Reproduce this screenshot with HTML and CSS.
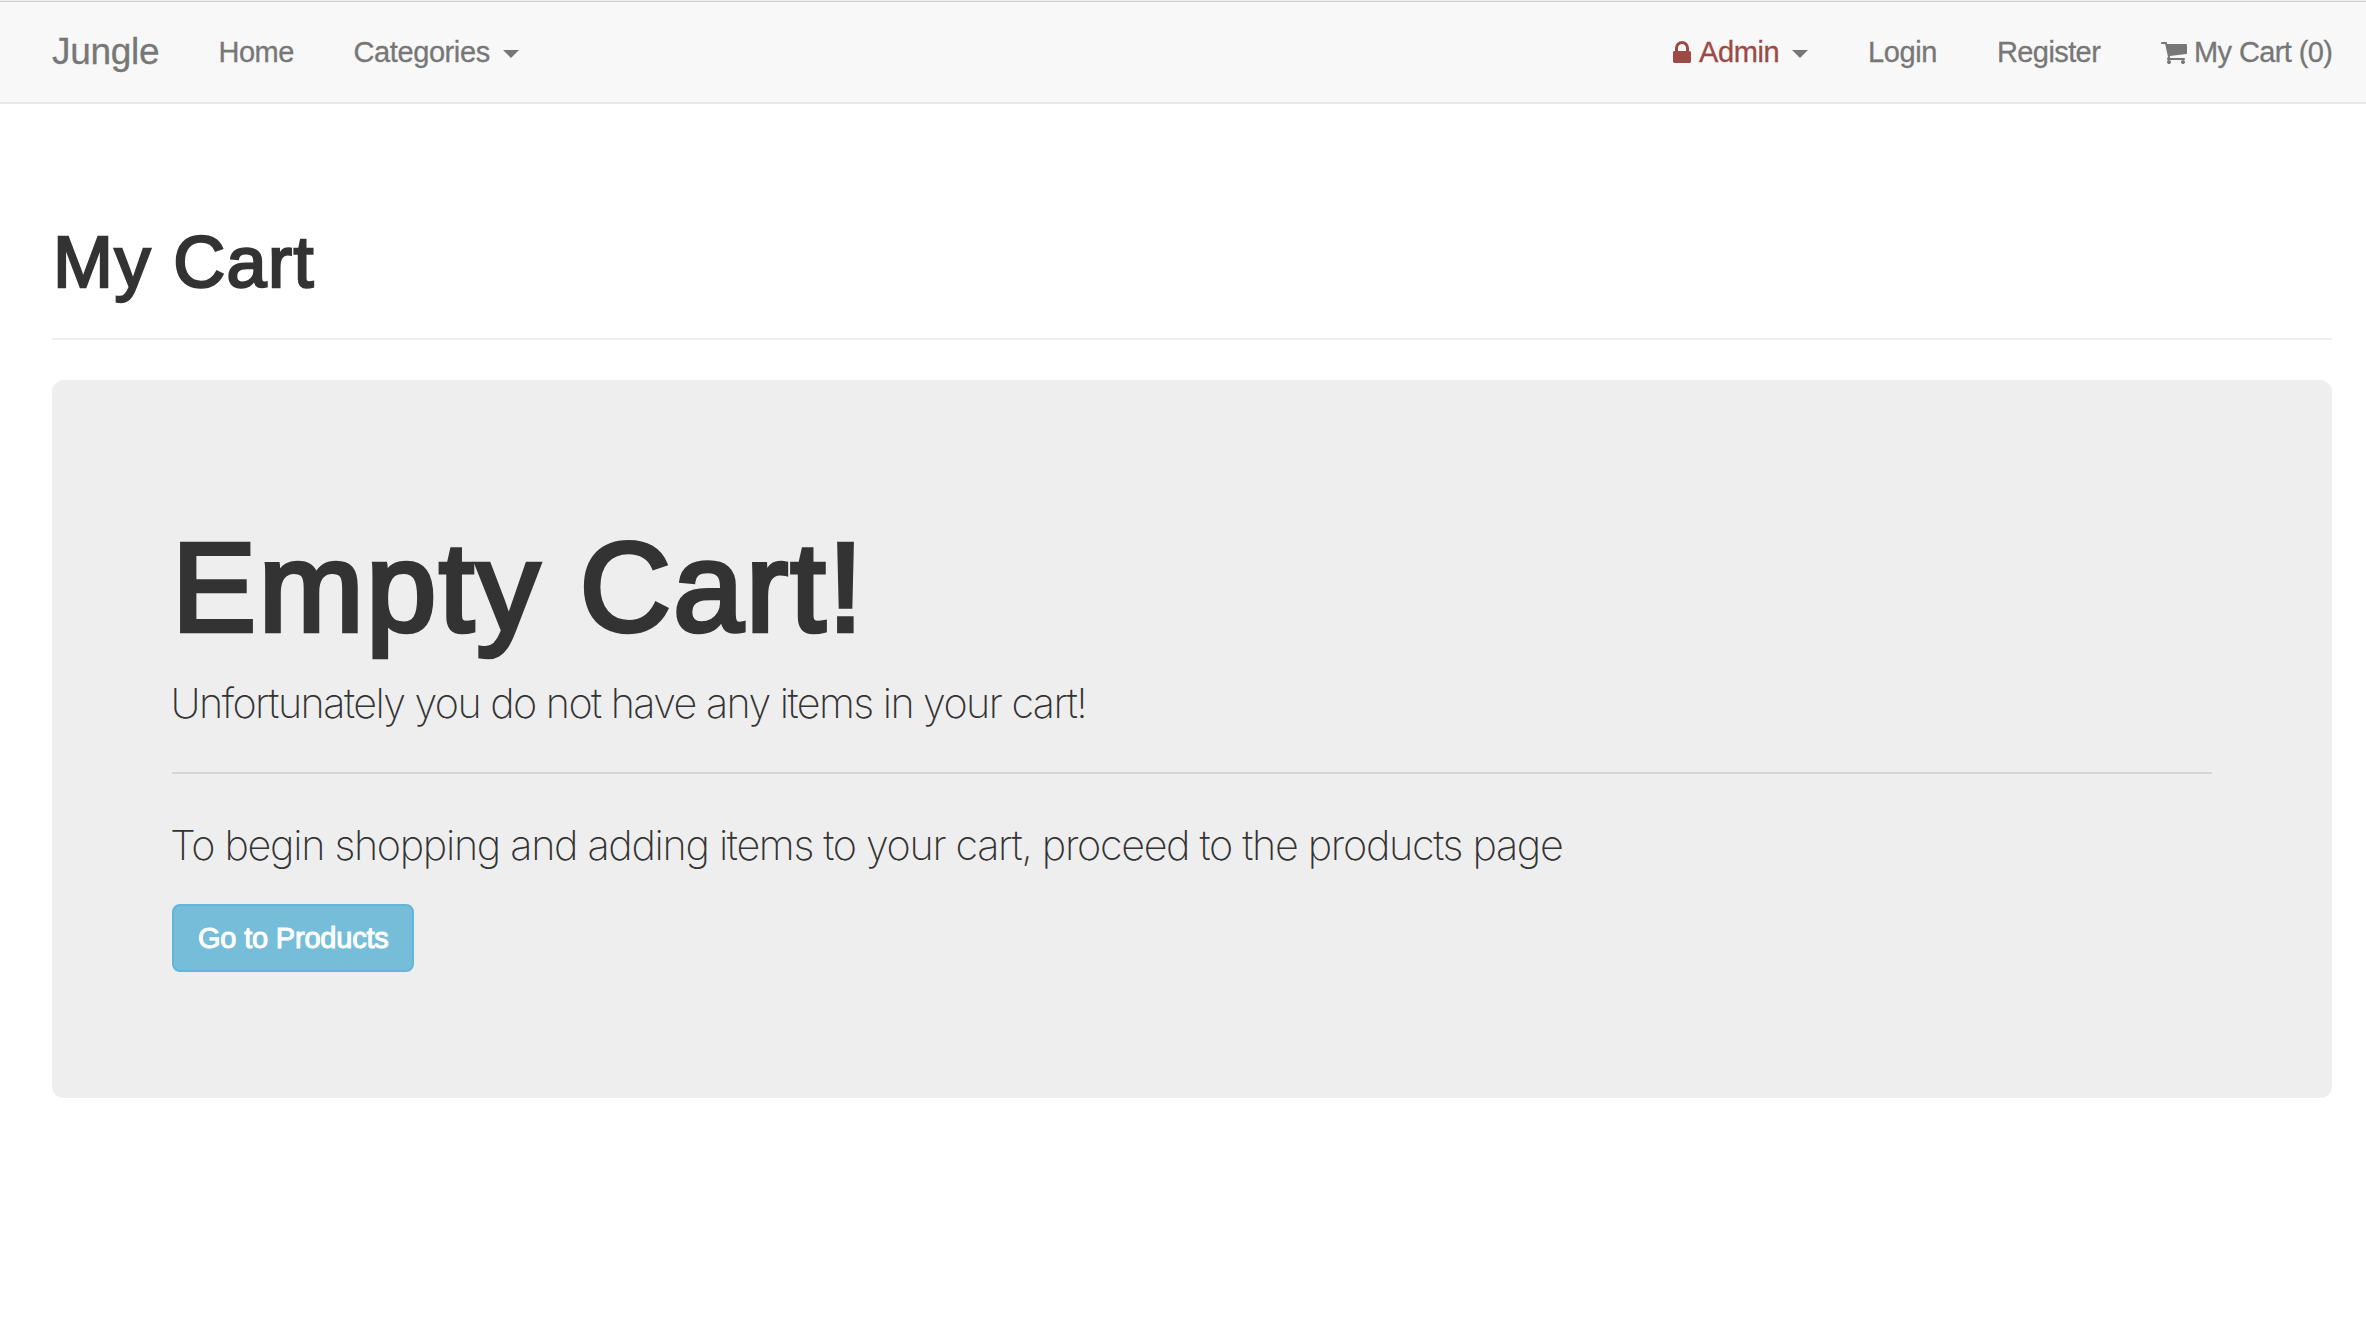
FILE: index.html
```html
<!DOCTYPE html>
<html lang="en">
<head>
<meta charset="utf-8">
<title>Jungle</title>
<link rel="stylesheet" href="styles.css">
</head>
<body>
<nav class="navbar">
  <div class="nav-group">
    <a class="brand">Jungle</a>
    <a class="nav-link home">Home</a>
    <a class="nav-link categories"><span>Categories</span><i class="caret"></i></a>
  </div>
  <div class="nav-group">
    <a class="nav-link admin">
      <svg class="icon-lock" viewBox="320 128 1152 1408"><path d="M640 768h512v-192q0-106-75-181t-181-75-181 75-75 181v192zm832 96v576q0 40-28 68t-68 28h-960q-40 0-68-28t-28-68v-576q0-40 28-68t68-28h32v-192q0-184 132-316t316-132 316 132 132 316v192h32q40 0 68 28t28 68z"/></svg>
      <span>Admin</span><i class="caret"></i>
    </a>
    <a class="nav-link login">Login</a>
    <a class="nav-link register">Register</a>
    <a class="nav-link cart">
      <svg class="icon-cart" viewBox="64 256 1664 1408"><path d="M704 1536q0 52-38 90t-90 38-90-38-38-90 38-90 90-38 90 38 38 90zm896 0q0 52-38 90t-90 38-90-38-38-90 38-90 90-38 90 38 38 90zm128-1088v512q0 24-16.500 42.500t-40.500 21.500l-1044 122q13 60 13 70 0 16-24 64h920q26 0 45 19t19 45-19 45-45 19h-1024q-26 0-45-19t-19-45q0-11 8-31.500t16-36 21.500-40 15.500-29.500l-177-823h-204q-26 0-45-19t-19-45 19-45 45-19h256q16 0 28.500 6.500t19.500 15.500 13 24.500 8 26 5.500 29.500 4.500 26h1201q26 0 45 19t19 45z"/></svg>
      <span>My Cart (0)</span>
    </a>
  </div>
</nav>
<main class="container">
  <header class="page-header"><h1 class="page-title">My Cart</h1></header>
  <section class="jumbotron">
    <h1 class="jumbo-title">Empty Cart!</h1>
    <p class="lead lead-first">Unfortunately you do not have any items in your cart!</p>
    <hr class="divider">
    <p class="lead lead-second">To begin shopping and adding items to your cart, proceed to the products page</p>
    <a class="btn"><span>Go to Products</span></a>
  </section>
</main>
</body>
</html>
```
FILE: styles.css
```css
* { box-sizing: border-box; }
body {
  margin: 0;
  padding-top: 1px;
  background: #fff linear-gradient(#f0f0f0, #f0f0f0) 0 0 / 100% 1px no-repeat;
  color: #333;
  font-family: "Liberation Sans", Arial, sans-serif;
  font-size: 29px;
}
h1, p { margin: 0; font-weight: 400; }
.navbar {
  display: flex;
  justify-content: space-between;
  height: 103px;
  padding: 0 34px 0 52px;
  background: #f8f8f8;
  border-top: 1px solid #d0d0d0;
  border-bottom: 2px solid #e7e7e7;
  color: #777;
  -webkit-text-stroke: 0.3px currentColor;
}
.nav-group { display: flex; align-items: center; white-space: nowrap; }
.brand { width: 107px; margin-right: 30px; font-size: 37px; line-height: 100px; letter-spacing: -0.3px; }
.nav-link { display: flex; align-items: center; line-height: 100px; letter-spacing: -0.6px; }
.home { width: 76px; margin: 0 59px 0 29.5px; letter-spacing: -0.5px; }
.categories { letter-spacing: -0.4px; }
.caret {
  border: 8px solid transparent;
  border-top-color: #777;
  border-bottom: 0;
  margin: 4px 0 0 13px;
}
.admin span { width: 80px; margin-left: 8px; color: #9d4a46; letter-spacing: -0.4px; }
.login { width: 69px; margin-left: 60px; letter-spacing: -0.4px; }
.register { width: 104px; margin-left: 60px; }
.cart { margin-left: 60px; }
.cart span { width: 138px; margin-left: 7px; }
svg { display: block; fill: currentColor; }
.icon-lock { width: 18px; height: 22px; color: #9d4a46; }
.icon-cart { width: 26px; height: 22px; margin-top: 2px; }
.container { width: 2280px; margin-left: 52px; }
.page-header { padding: 118px 0 0 1px; height: 236px; border-bottom: 2px solid #eee; }
.page-title { font-size: 72px; line-height: 80px; letter-spacing: 1.4px; -webkit-text-stroke: 2.4px #333; }
.jumbotron {
  height: 718px;
  margin-top: 40px;
  padding: 139px 120px 0;
  background: #eee;
  border-radius: 12px;
}
.jumbo-title { font-size: 126px; line-height: 138px; letter-spacing: 2.6px; -webkit-text-stroke: 4.6px #333; }
.lead { margin-left: -1.5px; font-family: Inter, sans-serif; font-size: 41.3px; font-weight: 200; line-height: 60px; white-space: nowrap; }
.lead-first { margin-top: 16px; letter-spacing: -1.55px; }
.divider { height: 2px; margin: 39px 0 0; border: 0; background: #d5d5d5; }
.lead-second { margin-top: 41px; margin-left: -2px; letter-spacing: -1.31px; }
.btn {
  display: flex;
  align-items: center;
  width: 242px;
  height: 68px;
  margin-top: 29px;
  padding-left: 24px;
  border: 2px solid #66b4d8;
  border-radius: 8px;
  background: #75bdd9;
  color: #fff;
  letter-spacing: -0.2px;
  white-space: nowrap;
  -webkit-text-stroke: 1px #fff;
}
```
